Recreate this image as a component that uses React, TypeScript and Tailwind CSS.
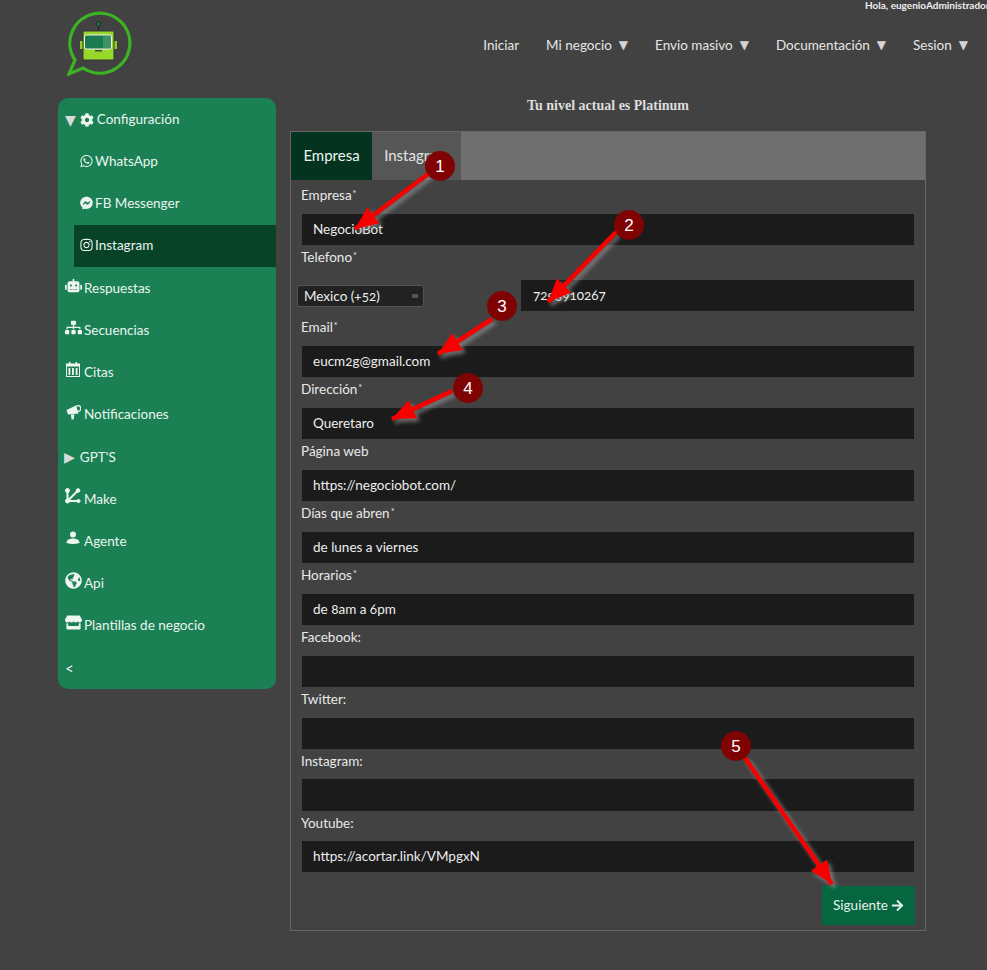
import type { ReactNode } from 'react'
import {
  FaArrowRight,
  FaCog,
  FaFacebookMessenger,
  FaGlobeAmericas,
  FaInstagram,
  FaRobot,
  FaSitemap,
  FaStore,
  FaWhatsapp,
} from 'react-icons/fa'

const Logo = () => (
  <svg width="66" height="66" viewBox="0 0 66 66" className="shrink-0">
    <path
      d="M2 63 L8 49 A30 30 0 1 1 16 57 Z"
      fill="none"
      stroke="#3bb324"
      strokeWidth="3.2"
      strokeLinejoin="miter"
    />
    <line x1="31.500" y1="14" x2="31.500" y2="21" stroke="#222" strokeWidth="1" />
    <circle cx="31.500" cy="13" r="2.200" fill="#157a4e" stroke="#222" strokeWidth="0.800" />
    <rect x="13" y="30" width="4" height="8" fill="#8fcf2a" />
    <rect x="46" y="30" width="4" height="8" fill="#8fcf2a" />
    <rect x="16" y="20" width="31" height="29" rx="1.500" fill="#98d82a" stroke="#333" strokeWidth="1" />
    <rect x="17.500" y="24" width="27" height="14" rx="2" fill="#1a7a50" stroke="#f2f2f2" strokeWidth="1" />
    <rect x="36" y="25" width="8" height="12" fill="#3c9460" />
    <rect x="28" y="39" width="7" height="1.500" fill="#444" />
  </svg>
)

const NavItem = ({ label, caret }: { label: string; caret?: boolean }) => (
  <div className="flex items-center whitespace-nowrap">
    <span>{label}</span>
    {caret && <span className="ml-[7px] font-['DejaVu_Sans',sans-serif] text-[12px] text-[#d4d4d4]">▼</span>}
  </div>
)

const CalendarIcon = () => (
  <svg width="14" height="15" viewBox="0 0 14 15" fill="currentColor">
    <rect x="0.500" y="2" width="13" height="12.500" fill="none" stroke="currentColor" />
    <rect x="0.500" y="2" width="13" height="2.500" />
    <rect x="3" y="0" width="1.500" height="3" />
    <rect x="9.500" y="0" width="1.500" height="3" />
    <rect x="2.500" y="6" width="1.800" height="7" />
    <rect x="6" y="6" width="1.800" height="7" />
    <rect x="9.700" y="6" width="1.800" height="7" />
  </svg>
)

const MakeIcon = () => (
  <svg width="16" height="16" viewBox="0 0 16 16" fill="currentColor" stroke="currentColor">
    <circle cx="2.500" cy="2.500" r="2" />
    <circle cx="2.500" cy="13" r="2" />
    <circle cx="13.500" cy="13" r="1.600" />
    <circle cx="13" cy="2.500" r="1.800" />
    <path d="M2.500 2.500V13H13.500M2.500 13L13 2.500" fill="none" strokeWidth="2" />
  </svg>
)

const MegaphoneIcon = () => (
  <svg width="15" height="16" viewBox="0 0 15 16" fill="currentColor">
    <path d="M0.500 6 L10 1.500 L12.500 9.500 L2 10.500 Z" />
    <path d="M5 10.500 H8.500 L7.500 15.500 H5.500 Z" />
    <circle cx="12" cy="4.500" r="2.800" fill="none" stroke="currentColor" strokeWidth="1.200" />
  </svg>
)

const AgentIcon = () => (
  <svg width="14" height="14" viewBox="0 0 14 14" fill="currentColor">
    <circle cx="7" cy="3.500" r="3" />
    <path d="M0.500 12 C0.500 8.500 4 7.500 7 7.500 C10 7.500 13.500 8.500 13.500 12 Q7 14 0.500 12 Z" />
  </svg>
)

const SideItem = ({
  icon,
  label,
  className = 'h-[42px] pl-[6px]',
}: {
  icon: ReactNode
  label: string
  className?: string
}) => (
  <div className={`flex items-center gap-[2px] ${className}`}>
    <span className="flex w-[18px] shrink-0 -translate-y-[3px] justify-center text-[17px] text-[#eef6f1]">{icon}</span>
    <span>{label}</span>
  </div>
)

const SubItem = ({ icon, label, active }: { icon: ReactNode; label: string; active?: boolean }) => (
  <div className={`ml-[16px] flex h-[42px] items-center gap-[2px] pb-[2px] pl-[6px] ${active ? 'bg-[#084227]' : ''}`}>
    <span className="flex w-[13px] shrink-0 justify-center text-[14px]">{icon}</span>
    <span>{label}</span>
  </div>
)

const Sidebar = () => (
  <aside className="h-[591px] w-[218px] shrink-0 rounded-[10px] bg-[#1b8054] text-[13.5px] text-[#eaf5ef]">
    <div className="flex h-[43px] items-center pl-[7px]">
      <span className="font-['DejaVu_Sans',sans-serif] text-[14px] leading-none text-[#d8dcd9]">▼</span>
      <FaCog className="ml-[4px] text-[14px]" />
      <span className="ml-[3px]">Configuración</span>
    </div>
    <SubItem icon={<FaWhatsapp />} label="WhatsApp" />
    <SubItem icon={<FaFacebookMessenger />} label="FB Messenger" />
    <SubItem icon={<FaInstagram />} label="Instagram" active />
    <SideItem icon={<FaRobot />} label="Respuestas" />
    <SideItem icon={<FaSitemap />} label="Secuencias" />
    <SideItem icon={<CalendarIcon />} label="Citas" />
    <SideItem icon={<MegaphoneIcon />} label="Notificaciones" className="h-[43px] pl-[6px]" />
    <div className="flex h-[42px] items-center pl-[6px]">
      <span className="font-['DejaVu_Sans',sans-serif] text-[14px] leading-none text-[#d8dcd9]">▶</span>
      <span className="ml-[5px]">GPT'S</span>
    </div>
    <SideItem icon={<MakeIcon />} label="Make" />
    <SideItem icon={<AgentIcon />} label="Agente" />
    <SideItem icon={<FaGlobeAmericas />} label="Api" />
    <SideItem icon={<FaStore />} label="Plantillas de negocio" className="h-[43px] pl-[6px]" />
    <div className="flex h-[42px] items-center pl-[7px] text-[15px]">&lt;</div>
  </aside>
)

const Req = () => <span className="relative -top-[3px] ml-[1px] text-[9px] leading-none">*</span>

const Field = ({
  label,
  value = '',
  required,
  labelClass = 'h-[31px]',
  inputClass = 'h-[31px]',
}: {
  label: string
  value?: string
  required?: boolean
  labelClass?: string
  inputClass?: string
}) => (
  <div>
    <label className={`block pl-[10px] leading-[13px] ${labelClass}`}>
      <span className="relative top-[6px]">
        {label}
        {required && <Req />}
      </span>
    </label>
    <input
      readOnly
      defaultValue={value}
      className={`ml-[11px] block w-[612px] bg-[#1b1b1b] px-[11px] pb-[2px] text-[13.5px] text-[#eeeeee] outline-none [font-variant-numeric:oldstyle-nums] ${inputClass}`}
    />
  </div>
)

const Form = () => (
  <div className="h-[800px] w-[636px] border border-[#666666] text-[13.5px] text-[#e9e9e9]">
    <div className="flex h-[48px] bg-[#6f6f6f] text-[15px]">
      <div className="flex w-[81px] items-center justify-center bg-[#04331f] pb-[2px] text-[#eef5f1]">Empresa</div>
      <div className="flex w-[89px] items-center justify-center bg-[#565656] pb-[2px] text-[#e4e4e4]">Instagram</div>
    </div>
    <Field required label="Empresa" value="NegocioBot" labelClass="h-[34px] pt-[3px]" />
    <label className="block h-[35px] pl-[10px] leading-[13px]">
      <span className="relative top-[6px]">
        Telefono
        <Req />
      </span>
    </label>
    <div className="flex h-[31px]">
      <div className="ml-[6px] mt-[5px] flex h-[22px] w-[127px] items-center justify-between rounded-[3px] border border-[#555555] bg-[#222222] pl-[6px] pr-[5px] text-[#eeeeee] [font-variant-numeric:oldstyle-nums]">
        <span>Mexico (+52)</span>
        <span className="h-[4px] w-[6px] bg-[#555555]" />
      </div>
      <input
        readOnly
        defaultValue="7293910267"
        className="ml-[97px] block h-[31px] w-[393px] bg-[#1b1b1b] px-[12px] pb-[2px] text-[13.5px] text-[#eeeeee] outline-none [font-variant-numeric:oldstyle-nums]"
      />
    </div>
    <Field required label="Email" value="eucm2g@gmail.com" labelClass="h-[35px] pt-[4px]" />
    <Field required label="Dirección" value="Queretaro" />
    <Field label="Página web" value="https://negociobot.com/" />
    <Field required label="Días que abren" value="de lunes a viernes" />
    <Field required label="Horarios" value="de 8am a 6pm" />
    <Field label="Facebook:" />
    <Field label="Twitter:" />
    <Field label="Instagram:" labelClass="h-[30px]" inputClass="h-[32px]" />
    <Field label="Youtube:" value="https://acortar.link/VMpgxN" labelClass="h-[30px]" />
    <div className="mt-[14px] flex justify-end pr-[10px]">
      <button className="flex h-[39px] w-[93px] items-center justify-center gap-[3px] bg-[#066640] text-[13.5px] text-[#e6f2ec]">
        Siguiente <FaArrowRight className="text-[13px]" />
      </button>
    </div>
  </div>
)

const marks = [
  { n: '1', cx: 440, cy: 166, x1: 428, y1: 174, x2: 355, y2: 229 },
  { n: '2', cx: 629, cy: 225, x1: 617, y1: 231, x2: 548, y2: 302 },
  { n: '3', cx: 502, cy: 306, x1: 492, y1: 319, x2: 438, y2: 354 },
  { n: '4', cx: 468, cy: 388, x1: 452, y1: 391, x2: 392, y2: 419 },
  { n: '5', cx: 736, cy: 746, x1: 745, y1: 758, x2: 832, y2: 884 },
]

const arrowHead = (x1: number, y1: number, x2: number, y2: number) => {
  const len = Math.hypot(x2 - x1, y2 - y1)
  const ux = (x2 - x1) / len
  const uy = (y2 - y1) / len
  const bx = x2 - ux * 23
  const by = y2 - uy * 23
  return `${x2},${y2} ${bx - uy * 10},${by + ux * 10} ${bx + uy * 10},${by - ux * 10}`
}

const Annotations = () => (
  <svg width="987" height="970" className="pointer-events-none absolute left-0 top-0">
    {marks.map((m) => (
      <g key={m.n}>
        <g className="drop-shadow-[3px_3px_2px_rgba(170,170,170,0.6)]">
          <line x1={m.x1} y1={m.y1} x2={m.x2} y2={m.y2} stroke="#f80000" strokeWidth="4.500" />
          <polygon points={arrowHead(m.x1, m.y1, m.x2, m.y2)} fill="#f80000" />
        </g>
        <circle cx={m.cx} cy={m.cy} r="15" fill="#7f0303" />
        <text
          x={m.cx}
          y={m.cy + 6}
          textAnchor="middle"
          fill="#ffffff"
          className="font-['Liberation_Sans',sans-serif] text-[17px]"
        >
          {m.n}
        </text>
      </g>
    ))}
  </svg>
)

export default function App() {
  return (
    <div className="relative h-[970px] w-[987px] overflow-hidden bg-[#424242] font-['Lato',sans-serif]">
      <header className="flex h-[98px]">
        <div className="ml-[67px] mt-[11px]">
          <Logo />
        </div>
        <div className="min-w-0 flex-1">
          <div className="ml-[732px] w-[122px] whitespace-nowrap text-[10px] font-bold leading-[11px] text-[#efefef]">
            Hola, eugenioAdministrador
          </div>
          <nav className="mt-[24px] flex justify-end gap-[27px] pr-[19px] text-[13.5px] leading-[20px] text-[#e6e6e6]">
            <NavItem label="Iniciar" />
            <NavItem label="Mi negocio" caret />
            <NavItem label="Envio masivo" caret />
            <NavItem label="Documentación" caret />
            <NavItem label="Sesion" caret />
          </nav>
        </div>
      </header>
      <main className="flex pl-[58px]">
        <Sidebar />
        <section className="ml-[14px] w-[636px]">
          <h1 className="h-[33px] text-center font-['Liberation_Serif',serif] text-[14px] font-bold leading-[15px] text-[#dddddd]">
            Tu nivel actual es Platinum
          </h1>
          <Form />
        </section>
      </main>
      <Annotations />
    </div>
  )
}
